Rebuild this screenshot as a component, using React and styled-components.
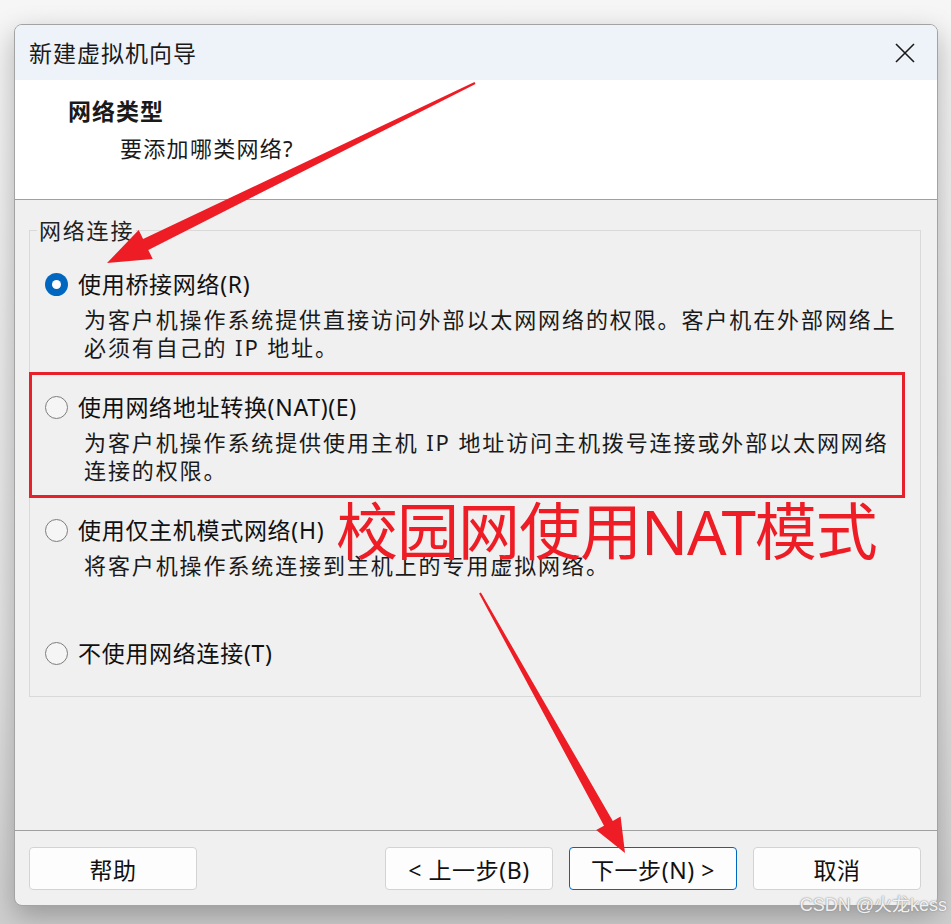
import React from "react";
import styled, { createGlobalStyle } from "styled-components";

const GlobalStyle = createGlobalStyle`
  html, body {
    margin: 0;
    padding: 0;
    background: #efefef;
  }
  body {
    font-family: "Noto Sans", "Noto Sans CJK SC", sans-serif;
    color: #1a1a1a;
  }
`

const Page = styled.div`
  position: relative;
  width: 951px;
  height: 924px;
  box-sizing: border-box;
  padding: 24px 0 0 14px;
  overflow: hidden;
  background: linear-gradient(#f6f6f6, #e4e4e4 70%, #cfcfcf);
`

const Window = styled.div`
  width: 924px;
  height: 882px;
  box-sizing: border-box;
  display: flex;
  flex-direction: column;
  border: 1px solid #a3a3a3;
  border-radius: 8px;
  overflow: hidden;
  background: #f0f0f0;
  box-shadow: 0 10px 28px rgba(0, 0, 0, 0.28);
`

const TitleBar = styled.div`
  height: 55px;
  flex: none;
  display: flex;
  align-items: center;
  justify-content: space-between;
  padding: 0 22px 0 14px;
  background: #eef3f9;
`

const Title = styled.div`
  font-size: 23px;
  letter-spacing: 1px;
  line-height: 30px;
`

const CloseButton = styled.div`
  width: 20px;
  height: 20px;
  display: flex;
`

const Header = styled.div`
  flex: none;
  box-sizing: border-box;
  height: 120px;
  padding: 15px 0 0 53px;
  background: #ffffff;
  border-bottom: 1px solid #a0a0a0;
`

const HeaderTitle = styled.div`
  font-size: 23px;
  font-weight: 700;
  letter-spacing: 1px;
  line-height: 32px;
`

const HeaderSub = styled.div`
  margin: 5px 0 0 52px;
  font-size: 22px;
  letter-spacing: 1.3px;
  line-height: 32px;
`

const Body = styled.div`
  flex: 1;
  padding: 15px 16px 0 14px;
`

const Group = styled.fieldset`
  margin: 0;
  padding: 24px 0 28px 0;
  border: 1px solid #d9d9d9;
  display: flex;
  flex-direction: column;
  gap: 31px;
`

const GroupLabel = styled.legend`
  margin-left: 7px;
  padding: 0 2px;
  font-size: 22px;
  letter-spacing: 1.8px;
  line-height: 30px;
  color: #222;
`

const Option = styled.div`
  display: flex;
  flex-direction: column;
  padding-left: 15px;
`

const OptionRow = styled.div`
  display: flex;
  align-items: center;
  gap: 10px;
  height: 30px;
`

const Radio = styled.span`
  width: 23px;
  height: 23px;
  box-sizing: border-box;
  border-radius: 50%;
  flex: none;
  display: flex;
  align-items: center;
  justify-content: center;
  background: ${(p) => (p.checked ? "#0067c0" : "rgba(255,255,255,0.35)")};
  border: ${(p) => (p.checked ? "none" : "1.5px solid #7d7d7d")};

  &::after {
    content: "";
    display: ${(p) => (p.checked ? "block" : "none")};
    width: 9px;
    height: 9px;
    border-radius: 50%;
    background: #ffffff;
  }
`

const OptionLabel = styled.span`
  font-size: 23px;
  letter-spacing: 0.7px;
  line-height: 30px;
  color: #111;
`

const OptionDesc = styled.div`
  margin: 6px 0 0 39px;
  min-height: ${(p) => (p.reserve ? "56px" : "0")};
  font-size: 22px;
  letter-spacing: 1.9px;
  line-height: 28px;
  color: #1a1a1a;
`

const Footer = styled.div`
  flex: none;
  display: flex;
  gap: 16px;
  padding: 16px 16px 15px 14px;
  border-top: 1px solid #a0a0a0;
`

const Spacer = styled.div`
  flex: 1;
`

const Button = styled.div`
  width: 168px;
  height: 43px;
  box-sizing: border-box;
  display: flex;
  align-items: center;
  justify-content: center;
  background: #fdfdfd;
  border: 1px solid ${(p) => (p.primary ? "#0067c0" : "#d3d3d3")};
  border-radius: 4px;
  font-size: 23px;
  letter-spacing: 0.6px;
  color: #111;
`

const Overlay = styled.svg`
  position: absolute;
  left: 0;
  top: 0;
  width: 951px;
  height: 924px;
  pointer-events: none;
`

const RedBox = styled.div`
  position: absolute;
  left: 29px;
  top: 372px;
  width: 876px;
  height: 126px;
  box-sizing: border-box;
  border: 3px solid #e8202a;
  pointer-events: none;
`

const Note = styled.div`
  position: absolute;
  left: 336px;
  top: 491px;
  font-size: 62px;
  letter-spacing: -1px;
  line-height: 80px;
  color: #ee1c25;
  white-space: nowrap;
  pointer-events: none;
`

const Watermark = styled.div`
  position: absolute;
  right: 4px;
  bottom: 8px;
  font-family: "Liberation Sans", "Noto Sans CJK SC", sans-serif;
  font-size: 18px;
  color: rgba(255, 255, 255, 0.9);
  text-shadow: 0 0 1px #8a8a8a, 0 0 2px #9a9a9a;
  pointer-events: none;
`

const options = [
  {
    label: "使用桥接网络(R)",
    desc: ["为客户机操作系统提供直接访问外部以太网网络的权限。客户机在外部网络上", "必须有自己的 IP 地址。"],
    checked: true,
  },
  {
    label: "使用网络地址转换(NAT)(E)",
    desc: ["为客户机操作系统提供使用主机 IP 地址访问主机拨号连接或外部以太网网络", "连接的权限。"],
  },
  {
    label: "使用仅主机模式网络(H)",
    desc: ["将客户机操作系统连接到主机上的专用虚拟网络。"],
  },
  {
    label: "不使用网络连接(T)",
  },
];

const App = () => {
  return (
    <Page>
      <GlobalStyle />
      <Window>
        <TitleBar>
          <Title>新建虚拟机向导</Title>
          <CloseButton>
            <svg width="20" height="20" viewBox="0 0 20 20">
              <path d="M1 1 L19 19 M19 1 L1 19" stroke="#1a1a1a" strokeWidth="1.6" fill="none" />
            </svg>
          </CloseButton>
        </TitleBar>

        <Header>
          <HeaderTitle>网络类型</HeaderTitle>
          <HeaderSub>要添加哪类网络?</HeaderSub>
        </Header>

        <Body>
          <Group>
            <GroupLabel>网络连接</GroupLabel>
            {options.map((opt) => (
              <Option key={opt.label}>
                <OptionRow>
                  <Radio checked={opt.checked} />
                  <OptionLabel>{opt.label}</OptionLabel>
                </OptionRow>
                {opt.desc && (
                  <OptionDesc reserve>
                    {opt.desc.map((line) => (
                      <div key={line}>{line}</div>
                    ))}
                  </OptionDesc>
                )}
              </Option>
            ))}
          </Group>
        </Body>

        <Footer>
          <Button>帮助</Button>
          <Spacer />
          <Button>&lt; 上一步(B)</Button>
          <Button primary>下一步(N) &gt;</Button>
          <Button>取消</Button>
        </Footer>
      </Window>

      {/* annotations drawn over the dialog */}
      <RedBox />
      <Note>校园网使用NAT模式</Note>
      <Overlay viewBox="0 0 951 924">
        <polygon
          fill="#ee1c25"
          points="475.5,83.9 474.5,82.1 143.1,239.1 138.7,230.1 107,263 152.7,258.9 148.3,249.9"
        />
        <polygon
          fill="#ee1c25"
          points="480.9,592.5 479.1,593.5 604.0,825.7 596.2,830.1 625,853 620.6,816.5 612.8,820.9"
        />
      </Overlay>
      <Watermark>CSDN @火龙kess</Watermark>
    </Page>
  );
}

export default App;
